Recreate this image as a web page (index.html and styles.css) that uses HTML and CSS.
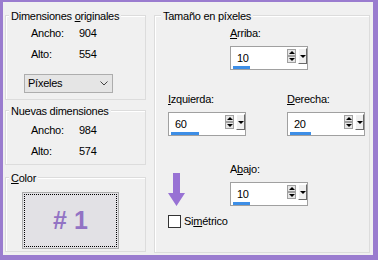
FILE: index.html
```html
<!DOCTYPE html>
<html lang="es">
<head>
    <meta charset="UTF-8">
    <title>Tamaño del lienzo</title>
    <link rel="stylesheet" href="styles.css">
</head>
<body>
    <div class="dialog">
        <div class="left-col">
            <div class="group original">
                <div class="group-title">Dimensiones <u>o</u>riginales</div>
                <div class="dim-row"><span class="dim-label">Ancho:</span><span>904</span></div>
                <div class="dim-row"><span class="dim-label">Alto:</span><span>554</span></div>
                <div class="unit-select">
                    <span>Píxeles</span>
                    <svg width="8" height="5" viewBox="0 0 8 5"><polyline points="0.5,0.5 4,4 7.5,0.5" fill="none" stroke="#444" stroke-width="1"/></svg>
                </div>
            </div>
            <div class="group new-size">
                <div class="group-title">Nuevas dimensiones</div>
                <div class="dims">
                    <div class="dim-row"><span class="dim-label">Ancho:</span><span>984</span></div>
                    <div class="dim-row"><span class="dim-label">Alto:</span><span>574</span></div>
                </div>
            </div>
            <div class="group color">
                <div class="group-title"><u>C</u>olor</div>
                <button class="color-btn"><span class="color-swatch"># 1</span></button>
            </div>
        </div>
        <div class="group pixels">
            <div class="group-title">Tamaño en píxeles</div>
            <div class="row-top">
                <div class="field">
                    <div class="field-label"><u>A</u>rriba:</div>
                    <div class="spin">
                        <div class="spin-value"><span>10</span><div class="spin-bar" style="width:17px"></div></div>
                        <div class="spin-arrows"><span class="spin-up"></span><span class="spin-down"></span></div>
                        <span class="spin-drop"></span>
                    </div>
                </div>
            </div>
            <div class="row-mid">
                <div class="field">
                    <div class="field-label"><u>I</u>zquierda:</div>
                    <div class="spin">
                        <div class="spin-value"><span>60</span><div class="spin-bar" style="width:28px"></div></div>
                        <div class="spin-arrows"><span class="spin-up"></span><span class="spin-down"></span></div>
                        <span class="spin-drop"></span>
                    </div>
                </div>
                <div class="field">
                    <div class="field-label"><u>D</u>erecha:</div>
                    <div class="spin">
                        <div class="spin-value"><span>20</span><div class="spin-bar" style="width:21px"></div></div>
                        <div class="spin-arrows"><span class="spin-up"></span><span class="spin-down"></span></div>
                        <span class="spin-drop"></span>
                    </div>
                </div>
            </div>
            <div class="row-bottom">
                <svg class="down-arrow" width="17" height="33" viewBox="0 0 17 33"><path d="M5 0H12V20H17L8.5 33L0 20H5Z" fill="#9872d4"/></svg>
                <div class="field">
                    <div class="field-label">A<u>b</u>ajo:</div>
                    <div class="spin">
                        <div class="spin-value"><span>10</span><div class="spin-bar" style="width:17px"></div></div>
                        <div class="spin-arrows"><span class="spin-up"></span><span class="spin-down"></span></div>
                        <span class="spin-drop"></span>
                    </div>
                </div>
            </div>
            <label class="check"><span class="check-box"></span><span>Si<u>m</u>étrico</span></label>
        </div>
    </div>
</body>
</html>
```

FILE: styles.css
```css
body { margin: 0; width: 378px; height: 260px; box-sizing: border-box; border: solid #9a7ccf; border-width: 2px 5px 5px 3px; background: #f0f0f0; font: 11px/13px "Liberation Sans", Arial, sans-serif; letter-spacing: -0.25px; color: #000; }
.dialog { display: flex; padding: 13px 0 0 2px; }
.left-col { display: flex; flex-direction: column; width: 141px; }
/* Group boxes */
.group { box-sizing: border-box; border: 1px solid #dcdcdc; box-shadow: inset 1px 1px 0 #fff; }
.group-title { width: fit-content; margin: -6px 0 0 3px; padding: 0 2px; background: #f0f0f0; }
.original { height: 85px; }
.new-size { height: 55px; margin-top: 10px; }
.new-size .dims { margin-top: 2px; }
.color { height: 75px; margin-top: 12px; }
.pixels { width: 216px; height: 238px; margin-left: 8px; }
.pixels .group-title { margin-left: 6px; }
.dim-row { display: flex; height: 21px; line-height: 21px; padding-left: 25px; }
.dim-label { width: 48px; }
.unit-select { display: flex; align-items: center; justify-content: space-between; box-sizing: border-box; width: 89px; height: 19px; margin: 9px 0 0 18px; padding: 0 4px 0 3px; border: 1px solid #adadad; background: #e5e5e5; }
.color-btn { display: block; box-sizing: border-box; width: 97px; height: 57px; margin: 7px 0 0 16px; padding: 1px; border: 1px solid #adadad; background: #e2e1e5; }
.color-swatch { display: flex; align-items: center; justify-content: center; box-sizing: border-box; height: 100%; border: 1px dotted #000; font: bold 25px/1 "Liberation Sans", Arial, sans-serif; color: #9273c4; }
/* Pixel fields */
.row-top { margin-top: 4px; padding-left: 75px; }
.row-mid { display: flex; gap: 41px; margin-top: 23px; padding-left: 13px; }
.row-bottom { display: flex; margin-top: 27px; padding-left: 13px; }
.down-arrow { margin: 10px 45px 0 0; }
.field-label { margin-bottom: 6px; }
.spin { display: flex; box-sizing: border-box; width: 78px; height: 24px; border: 1px solid #a0a0a0; background: #fff; }
.spin-value { flex: 1; padding: 5px 0 0 2px; }
.spin-value span { display: block; margin-left: 4px; }
.spin-bar { height: 3px; margin-top: 1px; background: #3d8ee6; }
.spin-arrows { display: flex; flex-direction: column; margin: 2px 2px 0 0; }
.spin-up, .spin-down { display: flex; align-items: center; justify-content: center; box-sizing: border-box; width: 9px; height: 7px; border: 1px solid #a0a0a0; background: #e6e6e6; }
.spin-up::before { content: ""; border-style: solid; border-width: 0 3px 3px; border-color: transparent transparent #000; }
.spin-down::before { content: ""; border-style: solid; border-width: 3px 3px 0; border-color: #000 transparent transparent; }
.spin-drop { display: flex; align-items: center; justify-content: center; box-sizing: border-box; width: 9px; height: 16px; margin-top: 1px; border: 1px solid; border-color: #fff #696969 #696969 #fff; background: #f0f0f0; }
.spin-drop::before { content: ""; border-style: solid; border-width: 3px 3px 0; border-color: #000 transparent transparent; }
.check { display: flex; align-items: center; gap: 3px; margin-top: 9px; padding-left: 13px; }
.check-box { box-sizing: border-box; width: 13px; height: 13px; border: 1px solid #333; background: #fff; }
```
